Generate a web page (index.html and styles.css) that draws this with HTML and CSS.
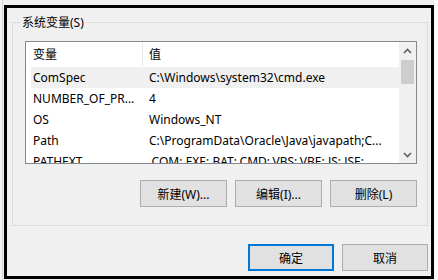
FILE: index.html
```html
<!DOCTYPE html>
<html lang="zh-CN">
<head>
<meta charset="utf-8">
<title>系统变量</title>
<link rel="stylesheet" href="styles.css">
</head>
<body>
<div class="screen">
  <div class="frame">
    <div class="group">
      <div class="group-title">系统变量(S)</div>
      <div class="group-body">
        <div class="list">
          <div class="list-main">
            <div class="list-head">
              <div class="hcell hcell-name">变量</div>
              <div class="hcell">值</div>
            </div>
            <div class="row selected"><div class="cell name">ComSpec</div><div class="cell">C:\Windows\system32\cmd.exe</div></div>
            <div class="row"><div class="cell name">NUMBER_OF_PR...</div><div class="cell">4</div></div>
            <div class="row"><div class="cell name">OS</div><div class="cell">Windows_NT</div></div>
            <div class="row"><div class="cell name">Path</div><div class="cell">C:\ProgramData\Oracle\Java\javapath;C...</div></div>
            <div class="row"><div class="cell name">PATHEXT</div><div class="cell">.COM;.EXE;.BAT;.CMD;.VBS;.VBE;.JS;.JSE;...</div></div>
          </div>
          <div class="scrollbar">
            <div class="sb-btn"><svg width="9" height="6" viewBox="0 0 9 6"><path d="M1 5 L4.5 1.5 L8 5" fill="none" stroke="#606060" stroke-width="1.6"/></svg></div>
            <div class="sb-thumb"></div>
            <div class="sb-space"></div>
            <div class="sb-btn"><svg width="9" height="6" viewBox="0 0 9 6"><path d="M1 1 L4.5 4.5 L8 1" fill="none" stroke="#606060" stroke-width="1.6"/></svg></div>
          </div>
        </div>
        <div class="btn-row">
          <button class="btn">新建(W)...</button>
          <button class="btn">编辑(I)...</button>
          <button class="btn">删除(L)</button>
        </div>
      </div>
    </div>
    <div class="dialog-buttons">
      <button class="btn btn-dlg btn-default">确定</button>
      <button class="btn btn-dlg">取消</button>
    </div>
  </div>
</div>
</body>
</html>
```
FILE: styles.css
```css
* { box-sizing: border-box; }
html, body { margin: 0; padding: 0; }
body {
  width: 438px;
  height: 280px;
  overflow: hidden;
  font-family: "Noto Sans", "Noto Sans CJK SC", sans-serif;
  font-size: 12px;
  color: #000;
}
.screen {
  width: 438px;
  height: 280px;
  padding: 5px 0 0 4px;
  background: linear-gradient(to right, #f2f2f2 0 2px, #d4d4d4 2px 3px, #f0f0f0 3px 434px, #fbfbfb 434px);
}
.frame {
  width: 430px;
  height: 274px;
  border: 3px solid #000;
  background: #f0f0f0;
  padding: 14px 3px 0 5px;
  display: flex;
  flex-direction: column;
}
.group {
  border: 1px solid #dcdcdc;
  height: 204px;
}
.group-title {
  width: fit-content;
  margin: -8px 0 0 7px;
  padding: 0 2px;
  height: 16px;
  line-height: 16px;
  background: #f0f0f0;
}
.group-body {
  padding: 10px 0 0 12px;
}
.list {
  width: 392px;
  height: 123px;
  border: 1px solid #828790;
  background: #fff;
  display: flex;
}
.list-main {
  flex: 1;
  min-width: 0;
  padding-left: 5px;
  overflow: hidden;
}
.list-head {
  display: grid;
  grid-template-columns: 112px 1fr;
  height: 25px;
  align-items: center;
}
.hcell {
  padding-left: 6px;
  line-height: 23px;
  height: 23px;
}
.hcell-name {
  padding-left: 2px;
  border-right: 1px solid #e5e5e5;
}
.row {
  display: grid;
  grid-template-columns: 112px 1fr;
  height: 21px;
  line-height: 21px;
}
.row.selected { background: #f0f0f0; }
.cell {
  white-space: nowrap;
  overflow: hidden;
  padding-left: 6px;
}
.cell.name { padding-left: 2px; }
.scrollbar {
  width: 17px;
  background: #f0f0f0;
  display: flex;
  flex-direction: column;
}
.sb-btn {
  height: 17px;
  display: flex;
  align-items: center;
  justify-content: center;
}
.sb-btn svg { display: block; }
.sb-thumb {
  height: 24px;
  margin: 1px 2px 0 2px;
  background: #cdcdcd;
}
.sb-space { flex: 1; }
.btn-row {
  display: flex;
  justify-content: flex-end;
  gap: 8px;
  width: 392px;
  margin-top: 16px;
}
.btn {
  width: 87px;
  height: 27px;
  padding: 0;
  border: 1px solid #adadad;
  background: #e1e1e1;
  font: inherit;
  color: #000;
}
.btn-dlg { width: 86px; }
.btn-default { border: 2px solid #0078d7; }
.dialog-buttons {
  display: flex;
  justify-content: flex-end;
  gap: 8px;
  margin-top: 18px;
}
```
